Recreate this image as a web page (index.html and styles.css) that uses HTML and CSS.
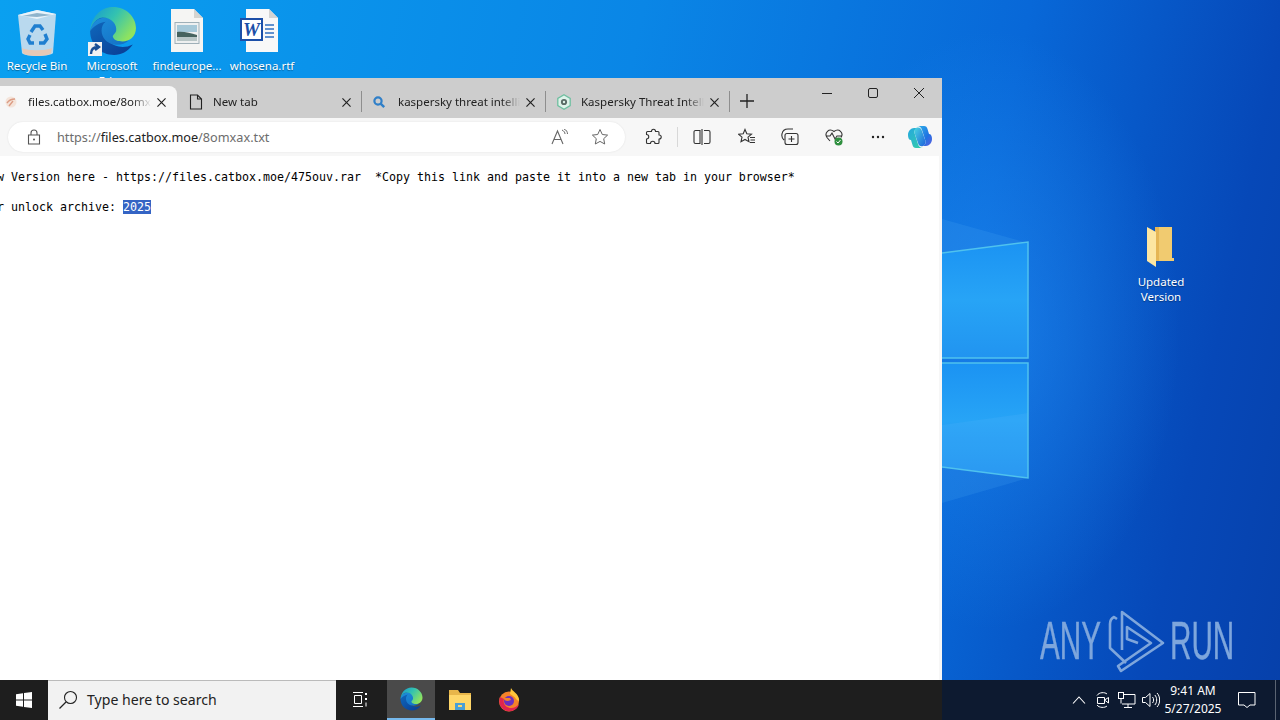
FILE: index.html
```html
<!DOCTYPE html>
<html lang="en">
<head>
    <meta charset="UTF-8">
    <meta name="viewport" content="width=device-width, initial-scale=1.0">
    <title>files.catbox.moe/8omxax.txt</title>
    <link rel="stylesheet" href="styles.css">
</head>
<body>

<svg class="defs" width="0" height="0">
    <defs>
        <linearGradient id="edge-top" x1="0" y1="0" x2="1" y2="0.6">
            <stop offset="0" stop-color="#1497d4"/>
            <stop offset="0.5" stop-color="#33c2b0"/>
            <stop offset="1" stop-color="#8fe35f"/>
        </linearGradient>
        <linearGradient id="edge-low" x1="0" y1="0" x2="0.8" y2="1">
            <stop offset="0" stop-color="#0f6cc0"/>
            <stop offset="1" stop-color="#0a3f96"/>
        </linearGradient>
        <linearGradient id="edge-in" x1="0" y1="0" x2="1" y2="1">
            <stop offset="0" stop-color="#1d8fdc"/>
            <stop offset="1" stop-color="#1470c4"/>
        </linearGradient>
        <linearGradient id="pane" x1="0" y1="0" x2="0" y2="1">
            <stop offset="0" stop-color="#1b93f3"/>
            <stop offset="0.5" stop-color="#27a4f6"/>
            <stop offset="1" stop-color="#2194f0"/>
        </linearGradient>
        <linearGradient id="copilot-a" x1="0" y1="0" x2="1" y2="1">
            <stop offset="0" stop-color="#2fb4ea"/>
            <stop offset="0.6" stop-color="#1f72e2"/>
            <stop offset="1" stop-color="#5b5fe0"/>
        </linearGradient>
        <linearGradient id="copilot-b" x1="0" y1="0" x2="1" y2="1">
            <stop offset="0" stop-color="#25a8e0"/>
            <stop offset="1" stop-color="#34cfa6"/>
        </linearGradient>
        <linearGradient id="copilot-c" x1="0" y1="0" x2="1" y2="1">
            <stop offset="0" stop-color="#4ad6e0"/>
            <stop offset="1" stop-color="#1c62dc"/>
        </linearGradient>
        <symbol id="edge" viewBox="0 0 48 48">
            <path fill="url(#edge-low)" d="M3 24C3 37 13 47 26 47c7 0 13-3 18-10-6 3-12 3-17 1-7-3-10-9-9-15 0-6 3-10 6-12C15 8 5 13 3 24z"/>
            <path fill="url(#edge-in)" d="M3 24c1-8 8-13 15-13 8 0 14 5 14 11 0 3-2 4-2 6 0 3 5 5 10 5-3 3-9 5-14 4-7-1-12-7-12-13 0-4 1-7 4-9-7 1-12 5-15 9z"/>
            <path fill="url(#edge-top)" d="M3 24C4 11 13 1 25 1c13 0 22 10 22 20 0 8-6 13-13 13-4 0-8-1-9-4-1-2 2-3 3-6 1-6-4-13-13-13C9 11 4 18 3 24z"/>
        </symbol>
    </defs>
</svg>

<div class="desktop">
    <svg class="logo-panes" width="100" height="300" viewBox="0 0 100 300">
        <polygon class="ray" points="0,0 86,24 0,34"/>
        <polygon class="ray" points="0,284 86,259 0,248"/>
        <polygon class="pane" points="0,34 86,23 86,139 0,139"/>
        <polygon class="pane" points="0,144 86,144 86,259 0,248"/>
        <polygon class="pane-light" points="0,206 86,194 86,259 0,248"/>
        <path class="pane-edge" d="M0 34L86 23V139H0"/>
        <path class="pane-edge" d="M0 144H86V259L0 248"/>
    </svg>

    <!-- desktop icons -->
    <div class="icon icon-bin">
        <svg width="44" height="50" viewBox="0 0 44 50">
            <path fill="#b9d9ee" d="M3 7l19-5 19 4-3 39c-1 2-9 3-16 3s-14-1-15-3z"/>
            <path fill="#e8f3fa" d="M3 7l19-5 19 4-19 5z"/>
            <path fill="#8fb4cc" d="M7 8l15-3 15 2-15 2z"/>
            <path fill="#e6c9b6" d="M7 40c5 3 24 3 30 0l-1 5c-1 2-7 3-14 3s-13-1-14-3z"/>
            <g fill="none" stroke="#1f7fd0" stroke-width="3.4">
                <path d="M16 24l4-6h5l3 4"/>
                <path d="M30 26l2 5-3 4h-5"/>
                <path d="M19 35h-4l-2-4 2-4"/>
            </g>
        </svg>
        <span class="icon-name">Recycle Bin</span>
    </div>
    <div class="icon icon-edge">
        <svg width="50" height="50"><use href="#edge"/></svg>
        <span class="shortcut">
            <svg width="12" height="12" viewBox="0 0 12 12"><path fill="none" stroke="#1a4f96" stroke-width="2.4" d="M2 11c0-5 2-7 7-7M6 1l4 3-4 3"/></svg>
        </span>
        <span class="icon-name">Microsoft<br>Edge</span>
    </div>
    <div class="icon icon-image">
        <svg width="34" height="44" viewBox="0 0 34 44">
            <path fill="#f5f5f3" d="M1 0h23l9 9v34H1z"/>
            <path fill="#d4d4d0" d="M24 0l9 9h-9z"/>
            <rect x="5" y="13.500" width="24" height="21" fill="#eef0f0" stroke="#9fb0b8"/>
            <rect x="7" y="16" width="20" height="7" fill="#a5c8d8"/>
            <path fill="#46635f" d="M7 23c6-1 13 1 20 3v2H7z"/>
            <rect x="7" y="28" width="20" height="4" fill="#b8c6c6"/>
        </svg>
        <span class="icon-name">findeurope...</span>
    </div>
    <div class="icon icon-word">
        <svg width="40" height="44" viewBox="0 0 40 44">
            <path fill="#f8f8f8" d="M6 0h23l9 9v34H6z"/>
            <path fill="#d4d4d4" d="M29 0l9 9h-9z"/>
            <path stroke="#2f6fc0" stroke-width="1.4" d="M25 16h9M25 20h9M25 24h9M25 28h9"/>
            <rect x="1" y="10" width="21" height="21" fill="#fff" stroke="#1c4fa8" stroke-width="2"/>
            <text class="word-w" x="11.5" y="27" text-anchor="middle">W</text>
        </svg>
        <span class="icon-name">whosena.rtf</span>
    </div>
    <div class="icon icon-folder">
        <svg width="30" height="42" viewBox="0 0 30 42">
            <path fill="#f1cb70" d="M9 1h17v31h2v3H9z"/>
            <path fill="#e6b655" d="M9 1h4v34H9z"/>
            <path fill="#fde6a2" d="M1 1l9 5v35l-9-6z"/>
        </svg>
        <span class="icon-name">Updated<br>Version</span>
    </div>

    <!-- browser -->
    <div class="window">
        <div class="tabstrip">
            <div class="tab active">
                <svg class="favicon" width="14" height="14" viewBox="0 0 14 14">
                    <circle cx="7" cy="7" r="5.500" fill="#f4e4da"/>
                    <path fill="none" stroke="#dc9c84" stroke-width="1.400" d="M3 8c2-3 5-4 8-4M5 11l4-5"/>
                </svg>
                <span class="tab-title">files.catbox.moe/8omxax.txt</span>
                <svg class="tab-close" width="9" height="9" viewBox="0 0 10 10"><path d="M0.5 0.5l9 9M9.5 0.5l-9 9"/></svg>
            </div>
            <div class="tab">
                <svg class="favicon favicon-wide" width="16" height="16" viewBox="0 0 16 16">
                    <path fill="none" stroke="#222" stroke-width="1.100" d="M2.500 1h7l4 4v10h-11zM9.500 1v4h4"/>
                </svg>
                <span class="tab-title">New tab</span>
                <svg class="tab-close" width="9" height="9" viewBox="0 0 10 10"><path d="M0.5 0.5l9 9M9.5 0.5l-9 9"/></svg>
            </div>
            <div class="tab">
                <svg class="favicon" width="14" height="14" viewBox="0 0 14 14">
                    <circle cx="6" cy="6" r="3.600" fill="none" stroke="#2f7fc8" stroke-width="2.200"/>
                    <path stroke="#2f7fc8" stroke-width="2.400" d="M8.600 8.600l3.600 3.600"/>
                </svg>
                <span class="tab-title">kaspersky threat intelligence</span>
                <svg class="tab-close" width="9" height="9" viewBox="0 0 10 10"><path d="M0.5 0.5l9 9M9.5 0.5l-9 9"/></svg>
            </div>
            <div class="tab">
                <svg class="favicon favicon-wide" width="16" height="16" viewBox="0 0 16 16">
                    <path fill="#dff3ea" stroke="#6fbfa0" stroke-width="1.300" d="M8 .8l6.200 3.600v7.200L8 15.200l-6.200-3.600V4.400z"/>
                    <circle cx="8" cy="8" r="3.100" fill="#5a6b66"/>
                    <circle cx="8" cy="8" r="1.200" fill="#dff3ea"/>
                </svg>
                <span class="tab-title">Kaspersky Threat Intelligence</span>
                <svg class="tab-close" width="9" height="9" viewBox="0 0 10 10"><path d="M0.5 0.5l9 9M9.5 0.5l-9 9"/></svg>
            </div>
            <svg class="new-tab" width="14" height="14" viewBox="0 0 14 14"><path stroke="#222" stroke-width="1.300" d="M7 0v14M0 7h14"/></svg>
            <div class="window-controls">
                <svg width="10" height="10" viewBox="0 0 10 10"><path stroke="#222" d="M0 5.500h10"/></svg>
                <svg width="10" height="10" viewBox="0 0 10 10"><rect x="0.500" y="0.500" width="9" height="9" rx="1.500" fill="none" stroke="#222"/></svg>
                <svg width="10" height="10" viewBox="0 0 10 10"><path stroke="#222" d="M0 0l10 10M10 0L0 10"/></svg>
            </div>
        </div>

        <div class="toolbar">
            <div class="address-bar">
                <svg class="lock" width="14" height="16" viewBox="0 0 14 16">
                    <path fill="none" stroke="#555" stroke-width="1.100" d="M1.500 6h11v9h-11zM4 6V4a3 3 0 0 1 6 0v2"/>
                    <circle cx="7" cy="10.500" r="1" fill="#555"/>
                </svg>
                <span class="url"><span class="dim">https://</span>files.catbox.moe<span class="dim">/8omxax.txt</span></span>
                <svg class="addr-read" width="18" height="16" viewBox="0 0 18 16">
                    <path fill="none" stroke="#666" stroke-width="1.100" d="M1 15L6.500 2 12 15M3 10.500h7"/>
                    <path fill="none" stroke="#666" d="M11 1c2 1 3 2.500 3 4M13 0c2.500 1 3.500 3 3.500 5"/>
                </svg>
                <svg class="addr-star" width="18" height="18" viewBox="0 0 18 18">
                    <path fill="none" stroke="#666" d="M9 1.500l2.300 5 5.300.6-3.900 3.600 1 5.300L9 13.400 4.300 16l1-5.300L1.400 7.100l5.300-.6z"/>
                </svg>
            </div>
            <svg class="tool tool-ext" width="18" height="18" viewBox="0 0 18 18">
                <path fill="none" stroke="#333" stroke-width="1.100" stroke-linejoin="round" d="M7.500 3.500c0-3 4-3 4 0h2.500a1 1 0 0 1 1 1V7c3 0 3 4 0 4v3.500a1 1 0 0 1-1 1h-3c0-3-4.500-3-4.500 0H3.500a1 1 0 0 1-1-1V11c3 0 3-4.500 0-4.500V4.500a1 1 0 0 1 1-1z"/>
            </svg>
            <span class="tool-sep"></span>
            <svg class="tool tool-split" width="18" height="16" viewBox="0 0 18 16">
                <path fill="none" stroke="#333" stroke-width="1.100" d="M7 1.500H2.500A1.500 1.500 0 0 0 1 3v10a1.500 1.500 0 0 0 1.500 1.500H7zM9 0v16M11 1.500h4.500A1.500 1.500 0 0 1 17 3v10a1.500 1.500 0 0 1-1.500 1.500H11"/>
            </svg>
            <svg class="tool tool-fav" width="18" height="18" viewBox="0 0 18 18">
                <path fill="none" stroke="#333" stroke-width="1.100" d="M7 1.500l1.800 4.300 4.700.4-3.500 3 1 4.500L7 11.500l-4 2.200 1-4.500-3.500-3 4.700-.4zM12 9.500h5M12.500 12h4.500M12 14.500h5"/>
            </svg>
            <svg class="tool tool-coll" width="18" height="18" viewBox="0 0 18 18">
                <path fill="none" stroke="#333" stroke-width="1.100" d="M3 12C1 10 .5 8 1 6c.5-3 3-5 6-5h5M6 16.500h9a2 2 0 0 0 2-2v-7a2 2 0 0 0-2-2H6a2 2 0 0 0-2 2v7a2 2 0 0 0 2 2zM10.500 8v6M7.500 11h6"/>
            </svg>
            <svg class="tool tool-heart" width="18" height="18" viewBox="0 0 18 18">
                <path fill="none" stroke="#333" stroke-width="1.100" d="M5 13L2 9.500C-1 5 4-.5 9 3.500c5-4 10 1.500 7 6M1 8h4l2-3 3 6 2-3h5"/>
                <circle cx="13.500" cy="13.500" r="4" fill="#2f8f3f"/>
                <path fill="none" stroke="#fff" d="M11.500 13.500l1.500 1.500 2.500-3"/>
            </svg>
            <svg class="tool tool-more" width="14" height="4" viewBox="0 0 14 4">
                <circle cx="2" cy="2" r="1.200" fill="#222"/><circle cx="7" cy="2" r="1.200" fill="#222"/><circle cx="12" cy="2" r="1.200" fill="#222"/>
            </svg>
            <svg class="tool tool-copilot" width="24" height="22" viewBox="0 0 24 22">
                <path fill="url(#copilot-b)" d="M15 22H8C6 22 5 21 4.500 19L3 14C1 14 0 12 0 9 0 5 3 2 6 2H9C7 3 6 5 6.500 7L10 18C10.500 20 12 22 15 22z"/>
                <path fill="url(#copilot-a)" d="M9 0H16C18 0 19 1 19.500 3L21 8C23 8 24 10 24 13 24 17 21 20 18 20H15C17 19 18 17 17.500 15L14 4C13.500 2 12 0 9 0z"/>
                <path fill="url(#copilot-c)" d="M9 1.500C12 1 13.500 3 14 5L17.500 15C18 18 16 19.500 15 20 12 21 10.500 19 10 17L6.500 7C6 4 7 2.500 9 1.500z"/>
            </svg>
        </div>

        <div class="page">
            <pre class="page-text">New Version here - https://files.catbox.moe/475ouv.rar  *Copy this link and paste it into a new tab in your browser*

For unlock archive: <span class="selected">2025</span></pre>
        </div>
    </div>

    <div class="watermark">
        <span class="wm-text wm-any">ANY</span>
        <svg class="wm-glyph" width="75" height="70" viewBox="0 0 75 70">
            <path fill="none" stroke="#7ea6dc" stroke-width="2.600" stroke-linejoin="round" d="M22 44V6L63 37 21 65 18 60 51 37 27 21V33L38 37"/>
            <path fill="none" stroke="#7ea6dc" stroke-width="2.600" stroke-linejoin="round" d="M17 13L14 11Q10 13 10 18V42L26 57"/>
        </svg>
        <span class="wm-text wm-run">RUN</span>
    </div>

    <!-- taskbar -->
    <div class="taskbar">
        <div class="start">
            <svg width="16" height="16" viewBox="0 0 16 16">
                <path fill="#fff" d="M0 2.200L7 1.200V7.500H0zM8 1L16 0V7.500H8zM0 8.500H7v6.300L0 13.800zM8 8.500H16V16L8 15z"/>
            </svg>
        </div>
        <div class="search-box">
            <svg width="20" height="20" viewBox="0 0 20 20">
                <circle cx="12.500" cy="7.500" r="6" fill="none" stroke="#222" stroke-width="1.100"/>
                <path stroke="#222" stroke-width="1.300" d="M8 12l-6.500 6.500"/>
            </svg>
            <span class="search-text">Type here to search</span>
        </div>
        <div class="task-btn task-view">
            <svg width="16" height="16" viewBox="0 0 16 16">
                <path fill="none" stroke="#fff" d="M1 .5h10M2.500 3.500h7v8h-7zM1 14.500h10"/>
                <path stroke="#fff" stroke-width="2" d="M14 1v2M14 6v2"/><path stroke="#fff" d="M14 10.500v4"/>
            </svg>
        </div>
        <div class="task-btn running">
            <svg width="24" height="24"><use href="#edge"/></svg>
        </div>
        <div class="task-btn task-files">
            <svg width="24" height="22" viewBox="0 0 24 22">
                <path fill="#e8b64a" d="M1 1h9l2 3h11v17H1z"/>
                <path fill="#ffd769" d="M1 6h22v15H1z"/>
                <path fill="#4a9fd8" d="M7 14h10v7H7z"/>
                <path fill="#ffd769" d="M10 16h4v2h-4z"/>
            </svg>
        </div>
        <div class="task-btn task-firefox">
            <svg width="24" height="24" viewBox="0 0 24 24">
                <circle cx="12" cy="13.500" r="10" fill="#f5822a"/>
                <path fill="#ffc63a" d="M14 0c1 3 7 5 8 11 .5 3-1 2-3 0-1-2-4-4-6-5z"/>
                <path fill="#e0254f" d="M3 9c-2 5 0 12 7 14 6 1 11-2 12-7-3 4-8 5-12 3-3-2-4-5-3-8z"/>
                <circle cx="12" cy="13" r="5" fill="#6b2fc0"/>
                <path fill="#f5822a" d="M7 10h6l1 2-3 1c-3 0-4-1-4-3z"/>
            </svg>
        </div>
        <div class="tray">
            <svg class="tray-chevron" width="14" height="8" viewBox="0 0 14 8"><path fill="none" stroke="#fff" stroke-width="1.100" d="M1 7.500l6-6.500 6 6.500"/></svg>
            <svg class="tray-meet" width="16" height="18" viewBox="0 0 16 18">
                <path fill="none" stroke="#fff" d="M2 4.500C4 1 10 1 12 3M2 14c2 3 8 3 10 1M2.500 6.500h7v6h-7zM9.500 9l4-2.500v5.500z"/>
            </svg>
            <svg class="tray-net" width="18" height="16" viewBox="0 0 18 16">
                <path fill="none" stroke="#fff" d="M4 2.500h13v9.500H4M10 12v3M6 15.500h8"/>
                <rect x="0.500" y="0.500" width="5" height="6" fill="#0d1a30" stroke="#fff"/>
                <path stroke="#fff" d="M3 6.500v5"/>
            </svg>
            <svg class="tray-vol" width="18" height="16" viewBox="0 0 18 16">
                <path fill="none" stroke="#fff" d="M.5 5.500h3L8 1.500v13l-4.500-4h-3zM10.500 5c1.500 1.500 1.500 4.500 0 6M12.800 3c2.500 2.500 2.500 7.500 0 10M15 1c3.500 3.500 3.500 10.500 0 14"/>
            </svg>
            <div class="clock">
                <span>9:41 AM</span>
                <span>5/27/2025</span>
            </div>
            <svg class="tray-notify" width="18" height="16" viewBox="0 0 18 16">
                <path fill="none" stroke="#fff" d="M.5 .5h16.500v12.500h-5l-3 2.500-3-2.500H.5z"/>
            </svg>
            <span class="show-desktop"></span>
        </div>
    </div>
</div>

</body>
</html>
```
FILE: styles.css
```css
html, body {
    margin: 0;
    padding: 0;
    height: 100%;
    overflow: hidden;
}
body {
    font-family: "Noto Sans", "Open Sans", sans-serif;
    color: #222;
}
.defs {
    display: block;
    height: 0;
}
.desktop {
    position: relative;
    width: 1280px;
    height: 720px;
    overflow: hidden;
    background:
        radial-gradient(ellipse 190px 300px at 990px 330px, rgba(40, 150, 250, 0.5), rgba(40, 150, 250, 0)),
        linear-gradient(102deg, #0aa0f0 0%, #0a86e6 45%, #0868d8 72%, #0648b8 90%, #0640aa 100%);
}
.logo-panes {
    position: absolute;
    left: 942px;
    top: 219px;
}
.ray {
    fill: rgba(90, 180, 250, 0.16);
}
.pane {
    fill: url(#pane);
}
.pane-light {
    fill: rgba(130, 200, 255, 0.1);
}
.pane-edge {
    fill: none;
    stroke: #4fc2ee;
    stroke-width: 1.500;
}

/* desktop icons */
.icon {
    position: absolute;
    width: 80px;
    display: flex;
    flex-direction: column;
    align-items: center;
    color: #fff;
    font-size: 11.500px;
    line-height: 15px;
    text-align: center;
    text-shadow: 0 1px 1px rgba(0, 0, 0, 0.35);
}
.icon-bin {
    left: -3px;
    top: 8px;
}
.icon-edge {
    left: 72px;
    top: 6px;
}
.icon-edge .icon-name {
    margin-top: 2px;
}
.shortcut {
    position: absolute;
    left: 16px;
    top: 36px;
    width: 14px;
    height: 14px;
    background: #f2f2f2;
    display: flex;
    align-items: center;
    justify-content: center;
}
.icon-image {
    left: 147px;
    top: 9px;
}
.icon-image .icon-name {
    margin-top: 5px;
}
.icon-word {
    left: 222px;
    top: 9px;
}
.icon-word svg {
    margin-right: 4px;
}
.icon-word .icon-name {
    margin-top: 5px;
}
.word-w {
    font-family: "Liberation Serif", serif;
    font-style: italic;
    font-weight: bold;
    font-size: 19px;
    fill: #1c4fa8;
    text-shadow: none;
}
.icon-folder {
    left: 1121px;
    top: 226px;
}
.icon-folder .icon-name {
    margin-top: 6px;
}

/* browser window */
.window {
    position: absolute;
    left: -25px;
    top: 78px;
    width: 967px;
    height: 602px;
    display: flex;
    flex-direction: column;
    background: #f7f7f7;
    overflow: hidden;
}
.tabstrip {
    height: 40px;
    background: #cdcdcd;
    display: flex;
    align-items: flex-end;
    padding-left: 18px;
    box-sizing: border-box;
    flex-shrink: 0;
}
.tab {
    width: 184px;
    height: 32px;
    flex-shrink: 0;
    display: flex;
    align-items: center;
    box-sizing: border-box;
    padding: 0 10px 0 11px;
    position: relative;
}
.tab + .tab::after {
    content: "";
    position: absolute;
    right: -1px;
    top: 5px;
    height: 21px;
    width: 1px;
    background: #8e8e8e;
}
.tab.active {
    background: #f7f7f7;
    border-radius: 8px 8px 0 0;
    padding-right: 11px;
}
.favicon {
    flex-shrink: 0;
    margin-right: 12px;
}
.active .favicon {
    margin-right: 10px;
}
.favicon-wide {
    margin-right: 9px;
}
.tab-title {
    flex: 1;
    min-width: 0;
    font-size: 11.500px;
    margin-bottom: 2px;
    white-space: nowrap;
    overflow: hidden;
    -webkit-mask-image: linear-gradient(to right, #000 85%, transparent);
    mask-image: linear-gradient(to right, #000 85%, transparent);
}
.tab-close {
    flex-shrink: 0;
    margin-left: 6px;
    stroke: #222;
    stroke-width: 1.300;
}
.new-tab {
    margin: 0 0 10px 11px;
}
.window-controls {
    margin-left: auto;
    align-self: flex-start;
    display: flex;
    gap: 36px;
    padding: 10px 18px 0 0;
}

.toolbar {
    height: 38px;
    flex-shrink: 0;
    display: flex;
    align-items: center;
    padding-left: 33px;
    box-sizing: border-box;
}
.address-bar {
    width: 617px;
    height: 30px;
    flex-shrink: 0;
    box-sizing: border-box;
    background: #fff;
    border-radius: 15px;
    display: flex;
    align-items: center;
    padding-left: 19px;
    box-shadow: 0 0 2px rgba(0, 0, 0, 0.1);
}
.lock {
    margin-right: 16px;
}
.url {
    font-size: 12.700px;
    color: #222;
    flex: 1;
}
.dim {
    color: #6d6d6d;
}
.addr-read {
    margin-right: 22px;
}
.addr-star {
    margin-right: 16px;
}
.tool {
    flex-shrink: 0;
}
.tool-ext {
    margin-left: 19px;
}
.tool-sep {
    width: 1px;
    height: 20px;
    background: #d8d8d8;
    margin: 0 15px;
}
.tool-fav {
    margin-left: 27px;
}
.tool-coll {
    margin-left: 25px;
}
.tool-heart {
    margin-left: 26px;
}
.tool-more {
    margin-left: 28px;
}
.tool-copilot {
    margin-left: 23px;
}

.page {
    flex: 1;
    background: #fff;
    border-radius: 8px 0 0 0;
    margin-right: 3px;
    padding: 14px 8px;
}
.page-text {
    margin: 0;
    font-family: "DejaVu Sans Mono", monospace;
    font-size: 11.630px;
    line-height: 15px;
    color: #000;
    white-space: pre;
}
.selected {
    background: #3464c4;
    color: #fff;
}

/* watermark */
.watermark {
    position: absolute;
    left: 1040px;
    top: 606px;
    height: 70px;
    display: flex;
    align-items: center;
}
.wm-text {
    font-family: "Liberation Sans", sans-serif;
    font-size: 53px;
    line-height: 62px;
    color: #7ea6dc;
    -webkit-text-stroke: 0.4px #7ea6dc;
    display: block;
    width: 60px;
    white-space: nowrap;
    transform: scaleX(0.56);
    transform-origin: left center;
}
.wm-glyph {
    flex-shrink: 0;
}
.wm-run {
    margin-left: -5px;
}

/* taskbar */
.taskbar {
    position: absolute;
    left: 0;
    bottom: 0;
    width: 100%;
    height: 40px;
    display: flex;
    background: linear-gradient(to right, #1e1e1e 942px, #0d1a30 942px);
}
.start {
    width: 48px;
    display: flex;
    align-items: center;
    justify-content: center;
}
.search-box {
    width: 288px;
    box-sizing: border-box;
    background: #f2f2f2;
    border-top: 1px solid #bbb;
    display: flex;
    align-items: center;
    padding: 0 0 2px 10px;
    gap: 9px;
}
.search-text {
    font-size: 14.100px;
    color: #222;
}
.task-btn {
    width: 48px;
    display: flex;
    align-items: center;
    justify-content: center;
    box-sizing: border-box;
}
.task-view {
    margin-right: 3px;
}
.task-files svg {
    margin-left: 2px;
}
.task-firefox svg {
    margin-left: 3px;
}
.running {
    background: #4a4a4a;
    border-bottom: 2px solid #76b9ed;
}
.tray {
    margin-left: auto;
    display: flex;
    align-items: center;
    color: #fff;
}
.tray-chevron {
    margin-right: 9px;
}
.tray-meet {
    margin-right: 7px;
}
.tray-net {
    margin-right: 6px;
}
.clock {
    width: 66px;
    display: flex;
    flex-direction: column;
    align-items: center;
    font-size: 12px;
    line-height: 18px;
}
.tray-notify {
    margin: 0 19px 0 12px;
}
.show-desktop {
    width: 1px;
    height: 40px;
    background: #5a6472;
    margin-right: 4px;
}
```
